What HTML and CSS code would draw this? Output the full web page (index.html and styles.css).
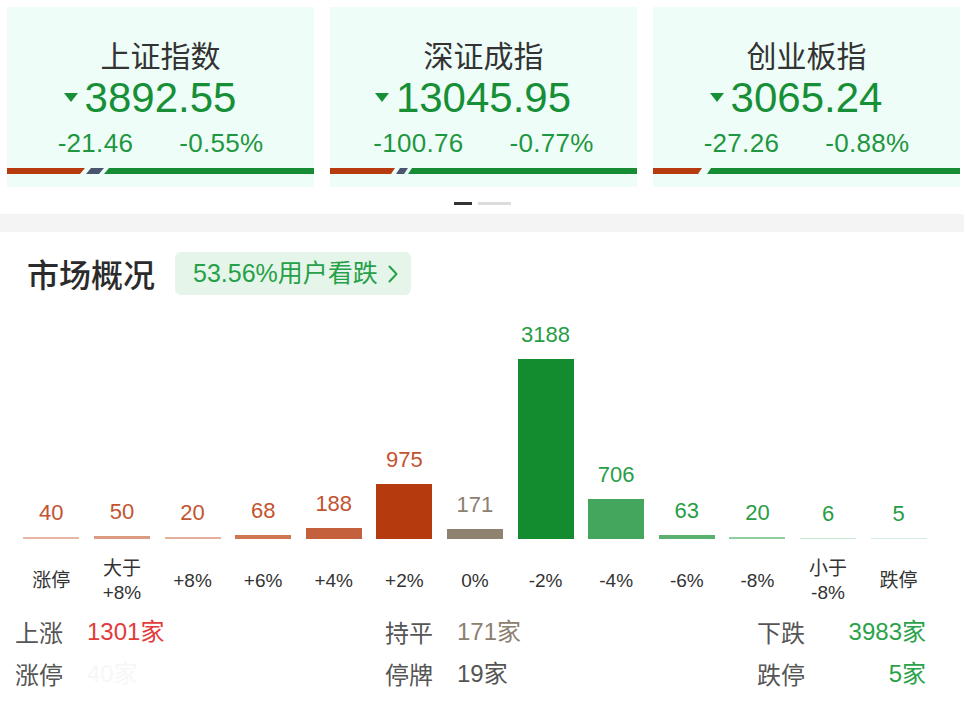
FILE: index.html
```html
<!DOCTYPE html>
<html lang="zh-CN">
<head>
<meta charset="utf-8">
<title>市场概况</title>
<link rel="stylesheet" href="styles.css">
</head>
<body>
<div class="page">
  <section class="indices">
    <div class="card">
      <div class="card-title">上证指数</div>
      <div class="card-price"><span class="price down">3892.55</span></div>
      <div class="card-change"><span>-21.46</span><span>-0.55%</span></div>
      <svg class="breadth" viewBox="0 0 307 6" preserveAspectRatio="none">
        <polygon points="0,0 78,0 73,6 0,6" fill="#b83b10"/>
        <polygon points="84,0 97,0 92,6 79,6" fill="#4a5670"/>
        <polygon points="102,0 307,0 307,6 97,6" fill="#168d34"/>
      </svg>
    </div>
    <div class="card">
      <div class="card-title">深证成指</div>
      <div class="card-price"><span class="price down">13045.95</span></div>
      <div class="card-change"><span>-100.76</span><span>-0.77%</span></div>
      <svg class="breadth" viewBox="0 0 307 6" preserveAspectRatio="none">
        <polygon points="0,0 65,0 61,6 0,6" fill="#b83b10"/>
        <polygon points="70,0 78,0 74,6 66,6" fill="#4a5670"/>
        <polygon points="82,0 307,0 307,6 78,6" fill="#168d34"/>
      </svg>
    </div>
    <div class="card">
      <div class="card-title">创业板指</div>
      <div class="card-price"><span class="price down">3065.24</span></div>
      <div class="card-change"><span>-27.26</span><span>-0.88%</span></div>
      <svg class="breadth" viewBox="0 0 307 6" preserveAspectRatio="none">
        <polygon points="0,0 49,0 45,6 0,6" fill="#b83b10"/>
        <polygon points="58,0 307,0 307,6 54,6" fill="#168d34"/>
      </svg>
    </div>
  </section>

  <div class="pager"><span class="dot active"></span><span class="dot"></span></div>

  <div class="band"></div>

  <section class="market">
    <div class="market-head">
      <h2 class="market-title">市场概况</h2>
      <a class="badge">53.56%用户看跌
        <svg class="chev" viewBox="0 0 10 18" width="10" height="18"><polyline points="1.5,1.5 8.5,9 1.5,16.5" fill="none" stroke="#27a04a" stroke-width="2" stroke-linecap="round" stroke-linejoin="round"/></svg>
      </a>
    </div>

    <div class="chart">
      <div class="col"><span class="val up">40</span><span class="bar b1" style="height:2.5px"></span></div>
      <div class="col"><span class="val up">50</span><span class="bar b2" style="height:3px"></span></div>
      <div class="col"><span class="val up">20</span><span class="bar b3" style="height:2px"></span></div>
      <div class="col"><span class="val up">68</span><span class="bar b4" style="height:4px"></span></div>
      <div class="col"><span class="val up">188</span><span class="bar b5" style="height:11px"></span></div>
      <div class="col"><span class="val up">975</span><span class="bar b6" style="height:55px"></span></div>
      <div class="col"><span class="val flat">171</span><span class="bar b7" style="height:10px"></span></div>
      <div class="col"><span class="val dn">3188</span><span class="bar b8" style="height:180px"></span></div>
      <div class="col"><span class="val dn">706</span><span class="bar b9" style="height:40px"></span></div>
      <div class="col"><span class="val dn">63</span><span class="bar b10" style="height:4px"></span></div>
      <div class="col"><span class="val dn">20</span><span class="bar b11" style="height:2px"></span></div>
      <div class="col"><span class="val dn">6</span><span class="bar b12" style="height:1px"></span></div>
      <div class="col"><span class="val dn">5</span><span class="bar b13" style="height:1px"></span></div>
    </div>

    <div class="axis">
      <div class="tick">涨停</div>
      <div class="tick">大于<br>+8%</div>
      <div class="tick">+8%</div>
      <div class="tick">+6%</div>
      <div class="tick">+4%</div>
      <div class="tick">+2%</div>
      <div class="tick">0%</div>
      <div class="tick">-2%</div>
      <div class="tick">-4%</div>
      <div class="tick">-6%</div>
      <div class="tick">-8%</div>
      <div class="tick">小于<br>-8%</div>
      <div class="tick">跌停</div>
    </div>

    <div class="stats">
      <div class="stat"><span class="k">上涨</span><span class="v red">1301家</span></div>
      <div class="stat"><span class="k">持平</span><span class="v brown">171家</span></div>
      <div class="stat wide"><span class="k">下跌</span><span class="v green">3983家</span></div>
      <div class="stat"><span class="k">涨停</span><span class="v ghost">40家</span></div>
      <div class="stat"><span class="k">停牌</span><span class="v gray">19家</span></div>
      <div class="stat wide"><span class="k">跌停</span><span class="v green">5家</span></div>
    </div>
  </section>
</div>
</body>
</html>
```

FILE: styles.css
```css
* { box-sizing: border-box; }

html, body {
  margin: 0;
  padding: 0;
  background: #ffffff;
}

body {
  font-family: "Liberation Sans", "Noto Sans CJK SC", sans-serif;
  color: #333333;
  width: 964px;
  height: 710px;
  overflow: hidden;
}

.page {
  width: 964px;
}

/* ---------- index cards ---------- */
.indices {
  display: flex;
  gap: 16px;
  padding: 7px 0 0 7px;
  overflow: hidden;
}

.card {
  flex: 0 0 307px;
  width: 307px;
  height: 180px;
  background: #effdf8;
  display: flex;
  flex-direction: column;
  align-items: center;
  padding-top: 29px;
}

.card-title {
  font-size: 30px;
  line-height: 36px;
  color: #333333;
  font-family: "Noto Sans CJK SC", sans-serif;
}

.card-price {
  margin-top: 4px;
  height: 44px;
  line-height: 44px;
  font-size: 42px;
  color: #178f37;
}

.price {
  position: relative;
  display: inline-block;
}

.price.down::before {
  content: "";
  position: absolute;
  left: -21px;
  top: 17px;
  width: 0;
  height: 0;
  border-left: 7px solid transparent;
  border-right: 7px solid transparent;
  border-top: 9px solid #178f37;
}

.card-change {
  margin-top: 8px;
  display: flex;
  gap: 46px;
  font-size: 26px;
  line-height: 30px;
  color: #1f9640;
}

.card-change span {
  letter-spacing: 0.3px;
}

.breadth {
  display: block;
  margin-top: 10px;
  width: 307px;
  height: 6px;
}

/* ---------- pager ---------- */
.pager {
  display: flex;
  justify-content: center;
  gap: 6px;
  margin: 15px 0 9px;
  height: 3px;
}

.dot {
  display: block;
  width: 33px;
  height: 3px;
  background: #dcdcdc;
}

.dot.active {
  width: 18px;
  background: #333333;
}

.band {
  height: 18px;
  background: #f4f4f4;
}

/* ---------- market ---------- */
.market {
  padding-top: 20px;
}

.market-head {
  display: flex;
  align-items: center;
  height: 43px;
  padding-left: 27px;
  gap: 20px;
}

.market-title {
  margin: 0;
  font-size: 32px;
  line-height: 43px;
  font-weight: 500;
  color: #2b2b2b;
  font-family: "Noto Sans CJK SC", sans-serif;
}

.badge {
  display: flex;
  align-items: center;
  height: 43px;
  padding: 0 13px 0 18px;
  background: #e5f5e9;
  border-radius: 6px;
  color: #27a04a;
  font-size: 25px;
  line-height: 43px;
  gap: 10px;
  text-decoration: none;
}

.chev {
  display: block;
}

/* ---------- chart ---------- */
.chart {
  display: flex;
  align-items: flex-end;
  height: 244px;
  width: 918px;
  margin-left: 16px;
}

.col {
  flex: 1 1 0;
  display: flex;
  flex-direction: column;
  align-items: center;
  justify-content: flex-end;
}

.val {
  font-size: 22px;
  line-height: 24px;
  margin-bottom: 12px;
}

.val.up { color: #c4532f; }
.val.flat { color: #8c8070; }
.val.dn { color: #279d46; }

.bar {
  display: block;
  width: 56px;
}

.b1 { background: #e8b6a4; }
.b2 { background: #dc9a80; }
.b3 { background: #e4b09c; }
.b4 { background: #cf7552; }
.b5 { background: #c4603b; }
.b6 { background: #b53a0e; }
.b7 { background: #8f8270; }
.b8 { background: #138b2f; }
.b9 { background: #44a55d; }
.b10 { background: #5bb270; }
.b11 { background: #8fcd9c; }
.b12 { background: #c8e7cf; }
.b13 { background: #d5ede0; }

.axis {
  display: flex;
  width: 918px;
  margin-left: 16px;
  margin-top: 18px;
  height: 48px;
}

.tick {
  flex: 1 1 0;
  display: flex;
  align-items: center;
  justify-content: center;
  text-align: center;
  font-size: 19px;
  line-height: 24px;
  color: #333333;
}

/* ---------- stats ---------- */
.stats {
  display: grid;
  grid-template-columns: 370px 372px 169px;
  grid-auto-rows: 42px;
  padding-left: 15px;
  margin-top: 6px;
}

.stat {
  display: flex;
  align-items: center;
  font-size: 24px;
  line-height: 42px;
}

.stat.wide {
  justify-content: space-between;
}

.stat .k {
  color: #555555;
  font-family: "Noto Sans CJK SC", sans-serif;
}

.stat .v {
  margin-left: 24px;
}

.stat.wide .v {
  margin-left: 0;
}

.v.red { color: #e23b3b; }
.v.brown { color: #8c8070; }
.v.gray { color: #555555; }
.v.green { color: #2aa24a; }
.v.ghost { color: #f7f7f7; }
```
